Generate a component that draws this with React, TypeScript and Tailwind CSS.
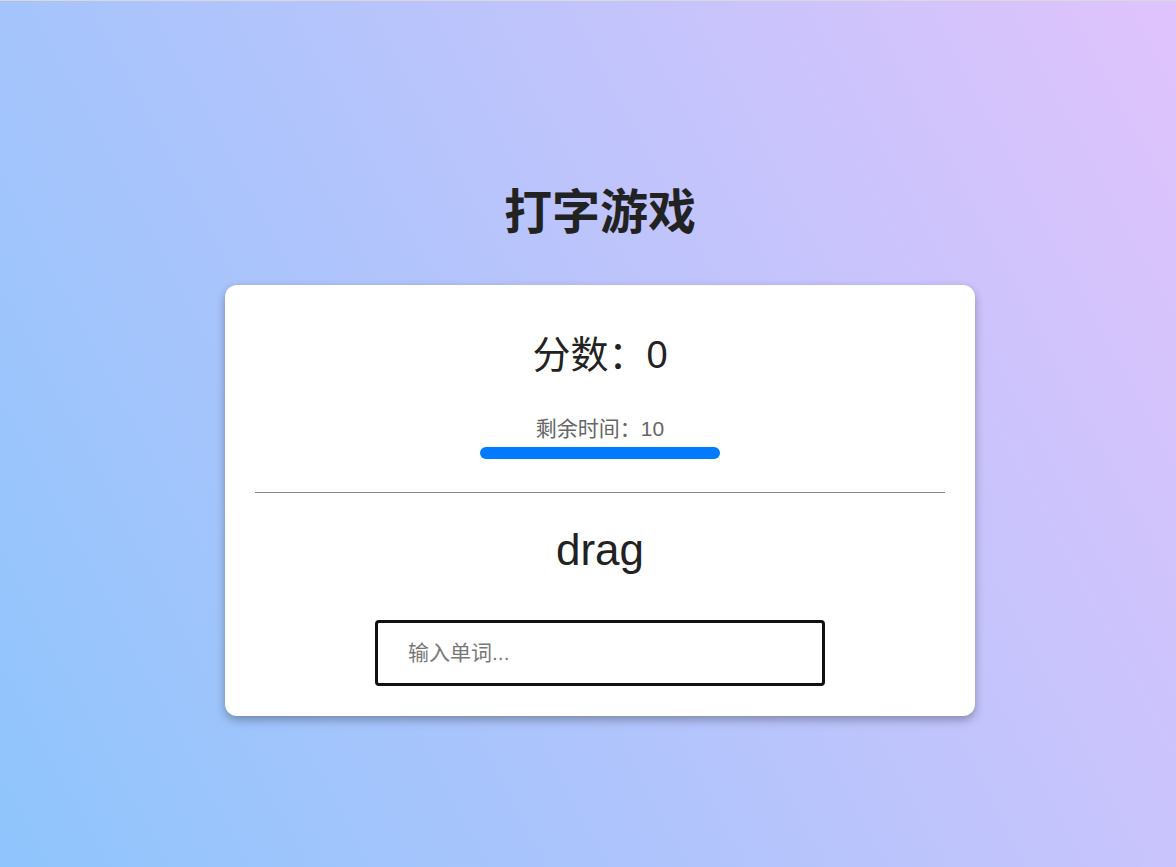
export default function App() {
  return (
    <div
      className="min-h-[867px] w-full border-t border-[#d9d9d9] bg-[linear-gradient(62deg,#8ec5fc_0%,#e0c3fc_100%)] flex flex-col items-center pt-[183px] pl-[24px]"
      style={{ fontFamily: '"Liberation Sans", Arial, "Noto Sans CJK SC", sans-serif' }}
    >
      <h1 className="text-[48px] leading-[58px] font-bold text-[#222]">打字游戏</h1>

      <div className="mt-[43px] w-[750px] bg-white rounded-[12px] shadow-[0_4px_10px_rgba(0,0,0,0.3)] px-[30px] pt-[47px] pb-[30px] flex flex-col items-center">
        <div className="text-[38px] leading-[46px] text-[#222]">分数：0</div>

        <div className="mt-[38px] text-[21px] leading-[25px] text-[#666]">剩余时间：10</div>
        <div className="mt-[6px] w-[240px] h-[12px] rounded-full bg-[#007bff]" />

        <hr className="mt-[33px] w-full border-0 border-t border-[#888]" />

        <div className="mt-[31px] text-[44px] leading-[52px] text-[#222]">drag</div>

        <input
          type="text"
          placeholder="输入单词..."
          className="mt-[44px] w-[450px] h-[66px] border-[3px] border-[#111] rounded-[4px] px-[30px] text-[21px] text-[#222] placeholder:text-[#777] outline-none"
        />
      </div>
    </div>
  )
}
